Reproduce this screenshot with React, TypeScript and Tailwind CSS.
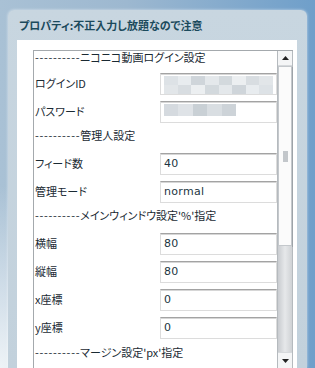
type Row =
  | { kind: 'head'; text: string; h: string }
  | { kind: 'field'; label: string; value?: string; mask?: 'id' | 'pw' };

const DASH = '----------';

const rows: Row[] = [
  { kind: 'head', text: 'ニコニコ動画ログイン設定', h: 'h-[16px]' },
  { kind: 'field', label: 'ログインID', mask: 'id' },
  { kind: 'field', label: 'パスワード', mask: 'pw' },
  { kind: 'head', text: '管理人設定', h: 'h-[24px]' },
  { kind: 'field', label: 'フィード数', value: '40' },
  { kind: 'field', label: '管理モード', value: 'normal' },
  { kind: 'head', text: "メインウィンドウ設定'%'指定", h: 'h-[24px]' },
  { kind: 'field', label: '横幅', value: '80' },
  { kind: 'field', label: '縦幅', value: '80' },
  { kind: 'field', label: 'x座標', value: '0' },
  { kind: 'field', label: 'y座標', value: '0' },
  { kind: 'head', text: "マージン設定'px'指定", h: 'h-[26px]' },
];

// ぼかし済みのID / パスワード
const idBlocks = ['bg-[#dde2e6]', 'bg-[#e8ecef]', 'bg-[#cfd5da]', 'bg-[#e4e8eb]', 'bg-[#d3d9dd]', 'bg-[#eceff1]', 'bg-[#d8dde1]', 'bg-[#e2e6e9]'];
const pwBlocks = ['bg-[#d5dadf]', 'bg-[#dfe3e7]', 'bg-[#c9d0d5]', 'bg-[#d9dee2]', 'bg-[#cdd3d8]'];

const Mask = ({ kind }: { kind: 'id' | 'pw' }) =>
  kind === 'id' ? (
    <div className="flex flex-col w-full h-[18px] mt-[1px]">
      <div className="flex h-[9px]">
        {idBlocks.map((c, i) => (
          <div key={i} className={`flex-1 ${c}`} />
        ))}
      </div>
      <div className="flex h-[9px]">
        {[...idBlocks].reverse().map((c, i) => (
          <div key={i} className={`flex-1 ${c}`} />
        ))}
      </div>
    </div>
  ) : (
    <div className="flex w-[72px] h-[12px] mt-[2px] self-start">
      {pwBlocks.map((c, i) => (
        <div key={i} className={`flex-1 ${c}`} />
      ))}
    </div>
  );

export default function App() {
  return (
    <div
      className="w-[315px] h-[368px] overflow-hidden pl-[8px] pr-[8px] pt-[10px] bg-[radial-gradient(ellipse_at_0%_100%,#eef3f7_0%,transparent_35%),linear-gradient(90deg,#a9c1d5_0%,#9db8d0_40%,#6f9fca_100%)]"
      style={{ fontFamily: '"Noto Sans CJK JP", "Noto Sans", sans-serif' }}
    >
      <div className="h-full flex flex-col rounded-t-[6px] bg-[linear-gradient(180deg,#c8d6e0_0%,#c2d1dc_100%)] pl-[9px] pr-[10px] shadow-[0_0_3px_rgba(255,255,255,0.6)]">
        {/* タイトル */}
        <div className="h-[30px] flex items-center pl-[2px] pt-[1px] text-[11px] font-bold text-[#1b4a5c] [font-feature-settings:'palt']">
          プロパティ:不正入力し放題なので注意
        </div>

        <div className="flex-1 bg-white pl-[16px] pr-[4px] pt-[10px] flex flex-col">
          <div className="flex-1 flex border-l border-t border-[#a4a9ad] overflow-hidden">
            <div className="flex-1 flex flex-col pl-[1px] text-[11px] text-[#1a2a33] [font-feature-settings:'palt']">
              {rows.map((r, i) =>
                r.kind === 'head' ? (
                  <div key={i} className={`${r.h} flex ${i === 0 ? 'items-start leading-[12px]' : 'items-center'} whitespace-nowrap`}>
                    <span className="tracking-[0.7px]">{DASH}</span>
                    {r.text}
                  </div>
                ) : (
                  <div key={i} className="h-[28px] flex items-end shrink-0">
                    <div className="w-[125px] h-[22px] flex items-center pb-[2px]">{r.label}</div>
                    <div className="w-[117px] h-[22px] flex items-center px-[3px] bg-white border border-[#dcdcdc] border-t-[#a3a3a3] shadow-[inset_0_1px_0_#d6d6d6]">
                      {r.mask ? (
                        <Mask kind={r.mask} />
                      ) : (
                        <span className="text-[11px] text-[#1c3542] tracking-[0.3px]" style={{ fontFamily: '"DejaVu Sans", sans-serif' }}>
                          {r.value}
                        </span>
                      )}
                    </div>
                  </div>
                )
              )}
            </div>

            {/* スクロールバー */}
            <div className="w-[16px] flex flex-col border-l border-r border-[#b5babe] bg-[#f4f5f6]">
              <div className="h-[15px] flex items-center justify-center border-b border-[#d6d9dc]">
                <svg width="7" height="4" viewBox="0 0 7 4">
                  <polygon points="3.5,0 7,4 0,4" fill="#222" />
                </svg>
              </div>
              <div className="h-[180px] flex items-center justify-center bg-[#fbfbfb] border border-[#c4c8cc] shadow-[1px_1px_0_#9da3a8]">
                <div className="w-[5px] h-[11px] bg-[#c3c7cb]" />
              </div>
              <div className="flex-1 bg-[linear-gradient(90deg,#c9ccd0_0%,#e6e8ea_50%,#cfd2d5_100%)]" />
              <div className="h-[16px] flex items-center justify-center bg-[#f4f5f6] border-t border-[#d6d9dc]">
                <svg width="7" height="4" viewBox="0 0 7 4">
                  <polygon points="0,0 7,0 3.5,4" fill="#222" />
                </svg>
              </div>
            </div>
          </div>
        </div>
      </div>
    </div>
  );
}
